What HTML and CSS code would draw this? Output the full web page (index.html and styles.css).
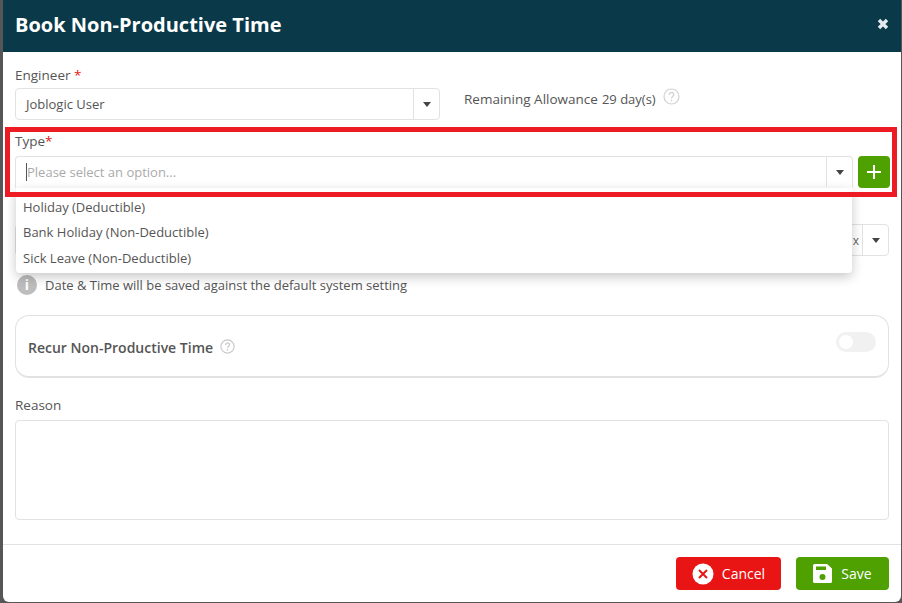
FILE: index.html
```html
<!DOCTYPE html>
<html lang="en">
<head>
    <meta charset="UTF-8">
    <meta name="viewport" content="width=device-width, initial-scale=1.0">
    <title>Book Non-Productive Time</title>
    <link rel="stylesheet" href="styles.css">
</head>
<body>
    <div class="modal">

        <div class="header">
            <h1>Book Non-Productive Time</h1>
            <svg class="close" width="12" height="12" viewBox="0 0 12 12"><path d="M2 2l8 8M10 2l-8 8" stroke="#e4eaec" stroke-width="3.4"/></svg>
        </div>

        <div class="content">
            <label class="lbl">Engineer <span class="req">*</span></label>
            <div class="engineer-row">
                <div class="select">
                    <span class="value">Joblogic User</span>
                    <span class="arrow"><i></i></span>
                </div>
                <p class="allowance">
                    <b>Remaining Allowance</b>
                    <span>29 day(s)</span>
                    <svg class="help" width="17" height="17" viewBox="0 0 17 17"><circle cx="8.5" cy="8.5" r="7.5" fill="none" stroke="#d2d2d2" stroke-width="1.2"/><path d="M6.2 6.8c0-3 4.6-3 4.6-.2 0 1.8-2.3 1.8-2.3 3.7" fill="none" stroke="#d2d2d2" stroke-width="1.3"/><circle cx="8.5" cy="12.3" r=".9" fill="#d2d2d2"/></svg>
                </p>
            </div>

            <label class="lbl type-lbl">Type<span class="req">*</span></label>
            <div class="type-row">
                <div class="select open">
                    <span class="value placeholder"><span class="caret"></span>Please select an option...</span>
                    <span class="arrow"><i></i></span>
                </div>
                <button class="add">
                    <svg width="16" height="16" viewBox="0 0 16 16"><path d="M8 1v14M1 8h14" stroke="#fff" stroke-width="2"/></svg>
                </button>
                <ul class="options">
                    <li>Holiday (Deductible)</li>
                    <li>Bank Holiday (Non-Deductible)</li>
                    <li>Sick Leave (Non-Deductible)</li>
                </ul>
            </div>

            <div class="date-row">
                <div class="select">
                    <span class="value clearable"><span class="clear">x</span></span>
                    <span class="arrow"><i></i></span>
                </div>
            </div>

            <div class="note">
                <span class="info">i</span>
                <span>Date &amp; Time will be saved against the default system setting</span>
            </div>

            <div class="recur">
                <span class="recur-title">Recur Non-Productive Time</span>
                <svg class="help" width="15" height="15" viewBox="0 0 17 17"><circle cx="8.5" cy="8.5" r="7.5" fill="none" stroke="#c8c8c8" stroke-width="1.3"/><path d="M6.2 6.8c0-3 4.6-3 4.6-.2 0 1.8-2.3 1.8-2.3 3.7" fill="none" stroke="#c8c8c8" stroke-width="1.4"/><circle cx="8.5" cy="12.3" r=".9" fill="#c8c8c8"/></svg>
                <span class="toggle"><i></i></span>
            </div>

            <label class="lbl reason-lbl">Reason</label>
            <div class="reason"></div>
        </div>

        <div class="footer">
            <button class="btn cancel">
                <svg width="22" height="22" viewBox="0 0 22 22"><circle cx="11" cy="11" r="10.5" fill="#fff"/><path d="M7 7l8 8M15 7l-8 8" stroke="#e91414" stroke-width="2"/></svg>
                Cancel
            </button>
            <button class="btn save">
                <svg width="19" height="19" viewBox="0 0 19 19"><path d="M1.5 0H14l5 4.500V17.500a1.500 1.500 0 0 1-1.500 1.500h-16A1.500 1.500 0 0 1 0 17.500v-16A1.500 1.500 0 0 1 1.500 0z" fill="#fff"/><rect x="3" y="2.5" width="10" height="3.500" fill="#4ea100"/><circle cx="9.5" cy="13" r="3" fill="#4ea100"/></svg>
                Save
            </button>
        </div>

        <div class="highlight"></div>
    </div>
</body>
</html>
```

FILE: styles.css
```css
*{
    box-sizing: border-box;
}
html, body{
    height: 100%;
}
body{
    margin: 0;
    background-color: #565656;
    font-family: "Open Sans", sans-serif;
    font-size: 13px;
    color: #555;
    overflow: hidden;
}
.modal{
    position: relative;
    display: flex;
    flex-direction: column;
    width: 898px;
    height: 602px;
    margin-left: 3px;
    background: white;
    border-radius: 0 0 6px 6px;
}
.header{
    display: flex;
    align-items: center;
    justify-content: space-between;
    height: 52px;
    padding: 0 12px;
    background-color: #0a3a4a;
    color: white;
}
.header h1{
    margin: -4px 0 0;
    font-size: 20px;
    font-weight: 700;
}
.close{
    margin-top: -4px;
}
.content{
    flex: 1;
    padding: 14px 12px 0;
}
.lbl{
    display: block;
    height: 18px;
    line-height: 18px;
    font-size: 13.5px;
    font-weight: 500;
}
.req{
    color: #e91414;
}
.select{
    display: flex;
    height: 32px;
    background: white;
    border: 1px solid #e2e2e2;
    border-radius: 4px;
}
.value{
    flex: 1;
    display: flex;
    align-items: center;
    padding-left: 10px;
    font-size: 13px;
}
.clearable{
    justify-content: flex-end;
    padding-right: 3px;
}
.clear{
    color: #666;
    font-size: 12px;
}
.arrow{
    display: flex;
    align-items: center;
    justify-content: center;
    width: 26px;
    border-left: 1px solid #e2e2e2;
}
.arrow i{
    width: 0;
    height: 0;
    border-left: 4.5px solid transparent;
    border-right: 4.5px solid transparent;
    border-top: 5px solid #444;
}
.engineer-row{
    display: flex;
    align-items: center;
    margin-top: 4px;
}
.engineer-row .select{
    width: 425px;
}
.allowance{
    display: flex;
    align-items: center;
    gap: 4px;
    margin: -11px 0 0 24px;
    font-size: 13px;
}
.allowance b{
    font-size: 13.5px;
    font-weight: 500;
}
.allowance .help{
    margin: -5px 0 0 3px;
}
.type-lbl{
    margin-top: 12px;
}
.type-row{
    position: relative;
    display: flex;
    gap: 5px;
    margin: 6px -1px 0 0;
}
.type-row .select{
    flex: 1;
}
.select.open{
    border-bottom-color: transparent;
    border-radius: 4px 4px 0 0;
}
.placeholder{
    color: #aaa;
}
.caret{
    width: 1px;
    height: 18px;
    background: #555;
}
.add{
    display: flex;
    align-items: center;
    justify-content: center;
    width: 32px;
    height: 32px;
    padding: 0;
    border: none;
    border-radius: 4px;
    background-color: #4ea100;
}
.options{
    position: absolute;
    top: 32px;
    left: 1px;
    width: 836px;
    height: 85px;
    margin: 0;
    padding: 6.6px 0 0;
    list-style: none;
    background: white;
    border-radius: 0 0 4px 4px;
    box-shadow: 0 4px 12px rgba(0,0,0,0.22);
    z-index: 2;
}
.options li{
    height: 25.5px;
    line-height: 25.5px;
    padding-left: 7px;
    font-size: 13px;
}
.date-row{
    margin-top: 36px;
}
.note{
    display: flex;
    align-items: center;
    gap: 8px;
    margin: 19px 0 0 2px;
    height: 20px;
    font-size: 13px;
}
.info{
    width: 20px;
    height: 20px;
    border-radius: 50%;
    background: #bdbdbd;
    color: white;
    font-size: 14px;
    font-weight: 700;
    line-height: 20px;
    text-align: center;
}
.recur{
    display: flex;
    align-items: center;
    height: 63px;
    margin-top: 20px;
    padding: 0 12px;
    border: 1px solid #e2e2e2;
    border-bottom-width: 2px;
    border-radius: 14px;
}
.recur-title{
    margin-top: 3px;
    font-size: 14px;
    font-weight: 600;
}
.recur .help{
    margin: 1px 0 0 7px;
}
.toggle{
    display: flex;
    align-items: center;
    width: 40px;
    height: 20px;
    margin: -9px 0 0 auto;
    padding-left: 3px;
    background: #f1f1f1;
    border-radius: 10px;
}
.toggle i{
    width: 14px;
    height: 14px;
    background: white;
    border-radius: 50%;
}
.reason-lbl{
    margin-top: 18px;
}
.reason{
    height: 100px;
    margin-top: 6px;
    border: 1px solid #e2e2e2;
    border-radius: 4px;
}
.footer{
    display: flex;
    justify-content: flex-end;
    gap: 15px;
    height: 58px;
    padding: 12px 12px 0;
    border-top: 1px solid #e2e2e2;
}
.btn{
    display: flex;
    align-items: center;
    justify-content: center;
    gap: 8px;
    height: 33px;
    padding: 0;
    border: none;
    border-radius: 4px;
    color: white;
    font-family: inherit;
    font-size: 14px;
}
.cancel{
    width: 105px;
    background-color: #e91414;
}
.save{
    width: 93px;
    gap: 9px;
    background-color: #4ea100;
}
/* annotation drawn over the form */
.highlight{
    position: absolute;
    top: 127px;
    left: 2px;
    width: 892px;
    height: 70px;
    border: 5px solid #ed1c24;
    z-index: 3;
}
```
